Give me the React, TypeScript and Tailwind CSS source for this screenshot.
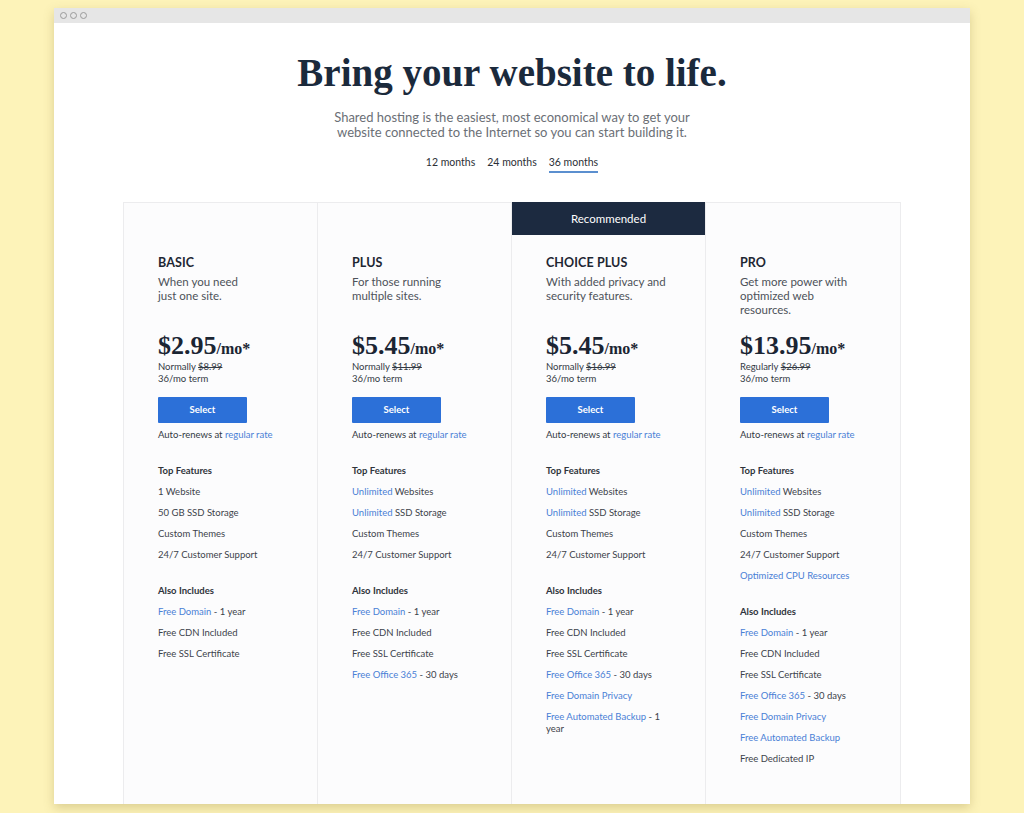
import React from "react";

type Item = { link?: string; text?: string; brk?: boolean };
type Plan = {
  name: string;
  desc: string[];
  price: string;
  label: string;
  old: string;
  top: Item[];
  also: Item[];
  recommended?: boolean;
};

const plans: Plan[] = [
  {
    name: "BASIC",
    desc: ["When you need", "just one site."],
    price: "$2.95",
    label: "Normally",
    old: "$8.99",
    top: [
      { text: "1 Website" },
      { text: "50 GB SSD Storage" },
      { text: "Custom Themes" },
      { text: "24/7 Customer Support" },
    ],
    also: [
      { link: "Free Domain", text: " - 1 year" },
      { text: "Free CDN Included" },
      { text: "Free SSL Certificate" },
    ],
  },
  {
    name: "PLUS",
    desc: ["For those running", "multiple sites."],
    price: "$5.45",
    label: "Normally",
    old: "$11.99",
    top: [
      { link: "Unlimited", text: " Websites" },
      { link: "Unlimited", text: " SSD Storage" },
      { text: "Custom Themes" },
      { text: "24/7 Customer Support" },
    ],
    also: [
      { link: "Free Domain", text: " - 1 year" },
      { text: "Free CDN Included" },
      { text: "Free SSL Certificate" },
      { link: "Free Office 365", text: " - 30 days" },
    ],
  },
  {
    name: "CHOICE PLUS",
    desc: ["With added privacy and", "security features."],
    price: "$5.45",
    label: "Normally",
    old: "$16.99",
    recommended: true,
    top: [
      { link: "Unlimited", text: " Websites" },
      { link: "Unlimited", text: " SSD Storage" },
      { text: "Custom Themes" },
      { text: "24/7 Customer Support" },
    ],
    also: [
      { link: "Free Domain", text: " - 1 year" },
      { text: "Free CDN Included" },
      { text: "Free SSL Certificate" },
      { link: "Free Office 365", text: " - 30 days" },
      { link: "Free Domain Privacy" },
      { link: "Free Automated Backup", text: " - 1", brk: true },
    ],
  },
  {
    name: "PRO",
    desc: ["Get more power with", "optimized web", "resources."],
    price: "$13.95",
    label: "Regularly",
    old: "$26.99",
    top: [
      { link: "Unlimited", text: " Websites" },
      { link: "Unlimited", text: " SSD Storage" },
      { text: "Custom Themes" },
      { text: "24/7 Customer Support" },
      { link: "Optimized CPU Resources" },
    ],
    also: [
      { link: "Free Domain", text: " - 1 year" },
      { text: "Free CDN Included" },
      { text: "Free SSL Certificate" },
      { link: "Free Office 365", text: " - 30 days" },
      { link: "Free Domain Privacy" },
      { link: "Free Automated Backup" },
      { text: "Free Dedicated IP" },
    ],
  },
];

const sans = "font-['Lato','Liberation_Sans',sans-serif]";
const serif = "font-['Liberation_Serif','DejaVu_Serif',serif]";

function Row({ item }: { item: Item }) {
  return (
    <li className="text-[9.5px] leading-[12px] text-[#3d434b] whitespace-nowrap">
      {item.link && <span className="text-[#4a80d6]">{item.link}</span>}
      {item.text && <span>{item.text}</span>}
      {item.brk && (
        <>
          <br />
          <span>year</span>
        </>
      )}
    </li>
  );
}

function Column({ plan, last }: { plan: Plan; last: boolean }) {
  return (
    <div
      className={`flex flex-col bg-[#fcfcfd] ${last ? "" : "border-r border-[#ececee]"}`}
    >
      <div className="h-[32px]">
        {plan.recommended && (
          <div className="h-[33px] -mt-px bg-[#1c2a40] flex items-center justify-center text-white text-[11.5px]">
            Recommended
          </div>
        )}
      </div>
      <div className="pl-[34px] pr-[20px] pt-[20px]">
        <div className="text-[12.5px] leading-[16px] font-bold text-[#1e2733] tracking-[0.1px]">
          {plan.name}
        </div>
        <div className="mt-[4px] h-[42px] text-[11.5px] leading-[14px] text-[#4d5259]">
          {plan.desc.map((d, i) => (
            <div key={i} className="whitespace-nowrap">
              {d}
            </div>
          ))}
        </div>
        <div className={`mt-[14px] h-[30px] leading-[30px] ${serif} font-bold text-[#1b2533] whitespace-nowrap`}>
          <span className="text-[26px]">{plan.price}</span>
          <span className="text-[16px]">/mo*</span>
        </div>
        <div className="text-[9.5px] leading-[12px] text-[#333a44]">
          {plan.label} <span className="line-through">{plan.old}</span>
        </div>
        <div className="text-[9.5px] leading-[12px] text-[#333a44]">36/mo term</div>
        <button className="mt-[12px] w-[89px] h-[26px] bg-[#2c70d8] text-white text-[9.5px] font-bold rounded-[1px]">
          Select
        </button>
        <div className="mt-[6px] text-[9.5px] leading-[12px] text-[#333a44] whitespace-nowrap">
          Auto-renews at <span className="text-[#4a80d6]">regular rate</span>
        </div>
        <div className="mt-[24px] text-[9.5px] leading-[12px] font-bold text-[#2f343b]">Top Features</div>
        <ul className="mt-[9px] flex flex-col gap-[9px]">
          {plan.top.map((it, i) => (
            <Row key={i} item={it} />
          ))}
        </ul>
        <div className="mt-[24px] text-[9.5px] leading-[12px] font-bold text-[#2f343b]">Also Includes</div>
        <ul className="mt-[9px] flex flex-col gap-[9px]">
          {plan.also.map((it, i) => (
            <Row key={i} item={it} />
          ))}
        </ul>
      </div>
    </div>
  );
}

export default function App() {
  return (
    <div className={`w-[1024px] h-[813px] bg-[#fdf3b9] pt-[8px] pl-[54px] overflow-hidden ${sans}`}>
      <div className="w-[916px] h-[796px] bg-white shadow-[0_4px_10px_rgba(120,100,30,0.25)] flex flex-col overflow-hidden">
        <div className="h-[15px] bg-[#e6e6e6] flex items-center pl-[6px] gap-[3px] shrink-0">
          <span className="w-[7px] h-[7px] rounded-full border border-[#9a9a9a]" />
          <span className="w-[7px] h-[7px] rounded-full border border-[#9a9a9a]" />
          <span className="w-[7px] h-[7px] rounded-full border border-[#9a9a9a]" />
        </div>
        <div className="flex flex-col items-center">
          <h1 className={`mt-[28px] ${serif} font-bold text-[39px] leading-[44px] text-[#1b2a3c]`}>
            Bring your website to life.
          </h1>
          <p className="mt-[15px] text-center text-[13px] leading-[15px] text-[#6b6f76]">
            Shared hosting is the easiest, most economical way to get your
            <br />
            website connected to the Internet so you can start building it.
          </p>
          <div className="mt-[15px] flex gap-[12px] text-[10.5px] leading-[14px] text-[#2b2f36]">
            <span>12 months</span>
            <span>24 months</span>
            <span className="border-b-2 border-[#5b8fcf] pb-[2px]">36 months</span>
          </div>
          <div className="mt-[29px] w-[778px] grid grid-cols-4 border-t border-l border-r border-[#ececee] h-[640px]">
            {plans.map((p, i) => (
              <Column key={p.name} plan={p} last={i === 3} />
            ))}
          </div>
        </div>
      </div>
    </div>
  );
}
